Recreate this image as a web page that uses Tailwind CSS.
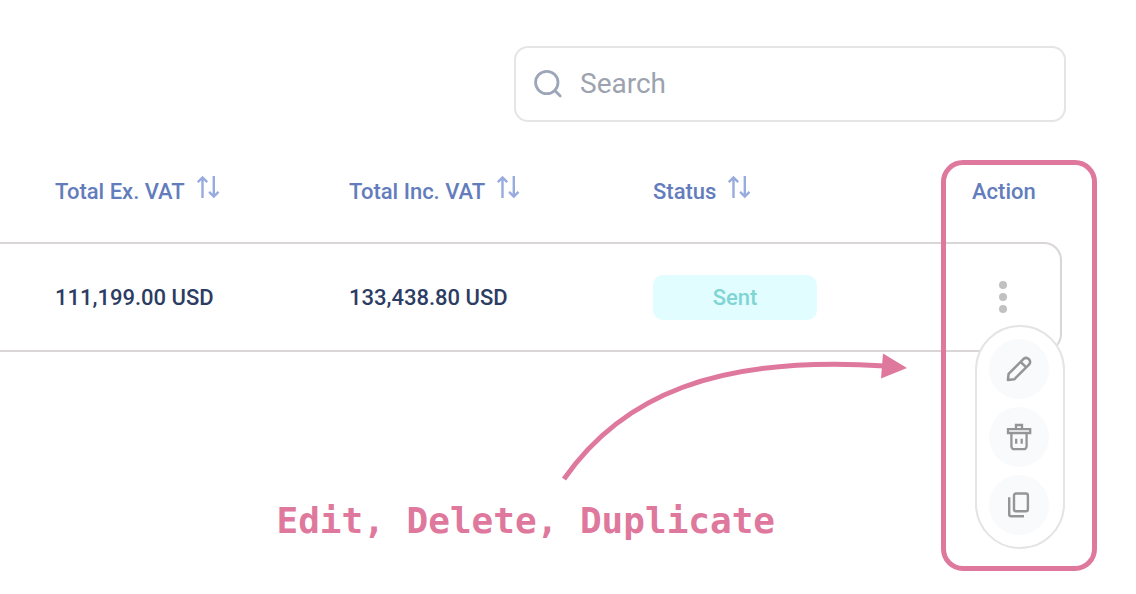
<!DOCTYPE html>
<html lang="en">
<head>
  <meta charset="UTF-8">
  <meta name="viewport" content="width=device-width, initial-scale=1.0">
  <title>Invoices</title>
  <script src="https://cdn.jsdelivr.net/npm/@tailwindcss/browser@4"></script>
</head>
<body class="bg-white font-['Roboto',sans-serif]">
  <main class="relative min-h-screen overflow-hidden">
    <!-- Search -->
    <div class="flex justify-end pt-[46px] pr-[70px]">
      <label for="search" class="flex h-[76px] w-full max-w-[552px] items-center gap-4 rounded-[14px] border-2 border-[#e5e5e5] px-4">
        <svg class="size-8 shrink-0 text-[#9ca6b8]" viewBox="0 0 32 32" fill="none" stroke="currentColor" stroke-width="2.8" stroke-linecap="round" aria-hidden="true">
          <circle cx="14.8" cy="14.5" r="11.2"/>
          <path d="M22.8 22.6 28.2 28"/>
        </svg>
        <input type="text" id="search" aria-label="Search" placeholder="Search" class="w-full min-w-0 text-[28px] text-gray-700 placeholder:text-[#9ca3af] focus:outline-none">
      </label>
    </div>

    <div class="relative mt-[38px] mr-[74px]">
      <table class="w-full table-fixed border-separate border-spacing-0 text-left text-[22px] font-medium">
        <colgroup>
          <col>
          <col class="w-[304px]">
          <col class="w-[319px]">
          <col class="w-[90px]">
        </colgroup>
        <thead class="text-[#637dbc]">
          <tr class="h-[82px] align-top">
            <th scope="col" class="pt-4 pl-[55px] font-medium">
              <button type="button" class="flex items-start gap-3 leading-[32px]">
                Total Ex. VAT
                <svg class="size-[23px]" viewBox="0 0 23 23" fill="none" stroke="#98abde" stroke-width="2.4" aria-hidden="true">
                  <path d="M5.5 22V1.5M.8 6.2 5.5 1.5l4.7 4.7M16.8 0v20.5M12.1 15.8l4.7 4.7 4.7-4.7"/>
                </svg>
              </button>
            </th>
            <th scope="col" class="pt-4 font-medium">
              <button type="button" class="flex items-start gap-3 leading-[32px]">
                Total Inc. VAT
                <svg class="size-[23px]" viewBox="0 0 23 23" fill="none" stroke="#98abde" stroke-width="2.4" aria-hidden="true">
                  <path d="M5.5 22V1.5M.8 6.2 5.5 1.5l4.7 4.7M16.8 0v20.5M12.1 15.8l4.7 4.7 4.7-4.7"/>
                </svg>
              </button>
            </th>
            <th scope="col" class="pt-4 font-medium">
              <button type="button" class="flex items-start gap-3 leading-[32px]">
                Status
                <svg class="size-[23px]" viewBox="0 0 23 23" fill="none" stroke="#98abde" stroke-width="2.4" aria-hidden="true">
                  <path d="M5.5 22V1.5M.8 6.2 5.5 1.5l4.7 4.7M16.8 0v20.5M12.1 15.8l4.7 4.7 4.7-4.7"/>
                </svg>
              </button>
            </th>
            <th scope="col" class="pt-4 leading-[32px] font-medium">Action</th>
          </tr>
        </thead>
        <tbody class="text-[#2c3c63]">
          <tr class="h-[110px]">
            <td class="border-y-2 border-[#dad6d8] pl-[55px]">111,199.00 USD</td>
            <td class="border-y-2 border-[#dad6d8]">133,438.80 USD</td>
            <td class="border-y-2 border-[#dad6d8]">
              <span class="flex h-[45px] w-[164px] items-center justify-center rounded-[10px] bg-[#e1fdff] text-[#80d5d3]">Sent</span>
            </td>
            <td class="relative rounded-r-[18px] border-y-2 border-r-2 border-[#dad6d8]">
              <button type="button" aria-label="Row actions" class="ml-[27px] flex flex-col gap-1">
                <span class="size-2 rounded-full bg-[#c1c1c1]"></span>
                <span class="size-2 rounded-full bg-[#c1c1c1]"></span>
                <span class="size-2 rounded-full bg-[#c1c1c1]"></span>
              </button>
              <!-- Row menu -->
              <div class="absolute top-[81px] -right-[5px] flex w-[90px] flex-col gap-2 rounded-full border-2 border-[#e4e4e4] bg-white p-3 text-[#959595]">
                <button type="button" aria-label="Edit" class="flex size-[60px] items-center justify-center rounded-full bg-[#f9fafc]">
                  <svg class="size-8" viewBox="0 0 32 32" fill="none" stroke="currentColor" stroke-width="2.5" stroke-linejoin="round" aria-hidden="true">
                    <path d="M4.9 27.1 5.6 20.8 20.6 5.8a4 4 0 0 1 5.6 5.6L11.3 26.3ZM17.6 8.8l5.6 5.6"/>
                  </svg>
                </button>
                <button type="button" aria-label="Delete" class="flex size-[60px] items-center justify-center rounded-full bg-[#f9fafc]">
                  <svg class="size-8" viewBox="0 0 32 32" fill="none" stroke="currentColor" stroke-width="2.3" aria-hidden="true">
                    <path d="M13 8V4h6v4M5 8.200h22.200v3.800H5ZM8.400 12v13.200a3 3 0 0 0 3 3h9.200a3 3 0 0 0 3-3V12M13.200 17.800v5M18.700 17.800v5"/>
                  </svg>
                </button>
                <button type="button" aria-label="Duplicate" class="flex size-[60px] items-center justify-center rounded-full bg-[#f9fafc]">
                  <svg class="size-8" viewBox="0 0 32 32" fill="none" stroke="currentColor" stroke-width="2.4" aria-hidden="true">
                    <rect x="11" y="4.5" width="13.9" height="17.8" rx="2"/>
                    <path d="M6.2 8.300v17a2 2 0 0 0 2 2H21"/>
                  </svg>
                </button>
              </div>
            </td>
          </tr>
        </tbody>
      </table>

      <!-- Highlight around the action column -->
      <div class="pointer-events-none absolute top-0 -right-[35px] h-[411px] w-[156px] rounded-[22px] border-5 border-[#df789d]"></div>
    </div>

    <!-- Callout -->
    <svg class="pointer-events-none absolute top-[350px] right-[226px] h-[136px] w-[350px]" viewBox="560 350 350 136" fill="none" aria-hidden="true">
      <path d="M564 479C622 396 716 355 885 366" stroke="#df789d" stroke-width="5"/>
      <path d="M883 353.500 907 368 881 378.500Z" fill="#df789d"/>
    </svg>
    <p class="mt-[145px] pr-[361px] text-right font-['DejaVu_Sans_Mono',monospace] text-4xl leading-[48px] font-bold text-[#df789d]">Edit, Delete, Duplicate</p>
  </main>
</body>
</html>
